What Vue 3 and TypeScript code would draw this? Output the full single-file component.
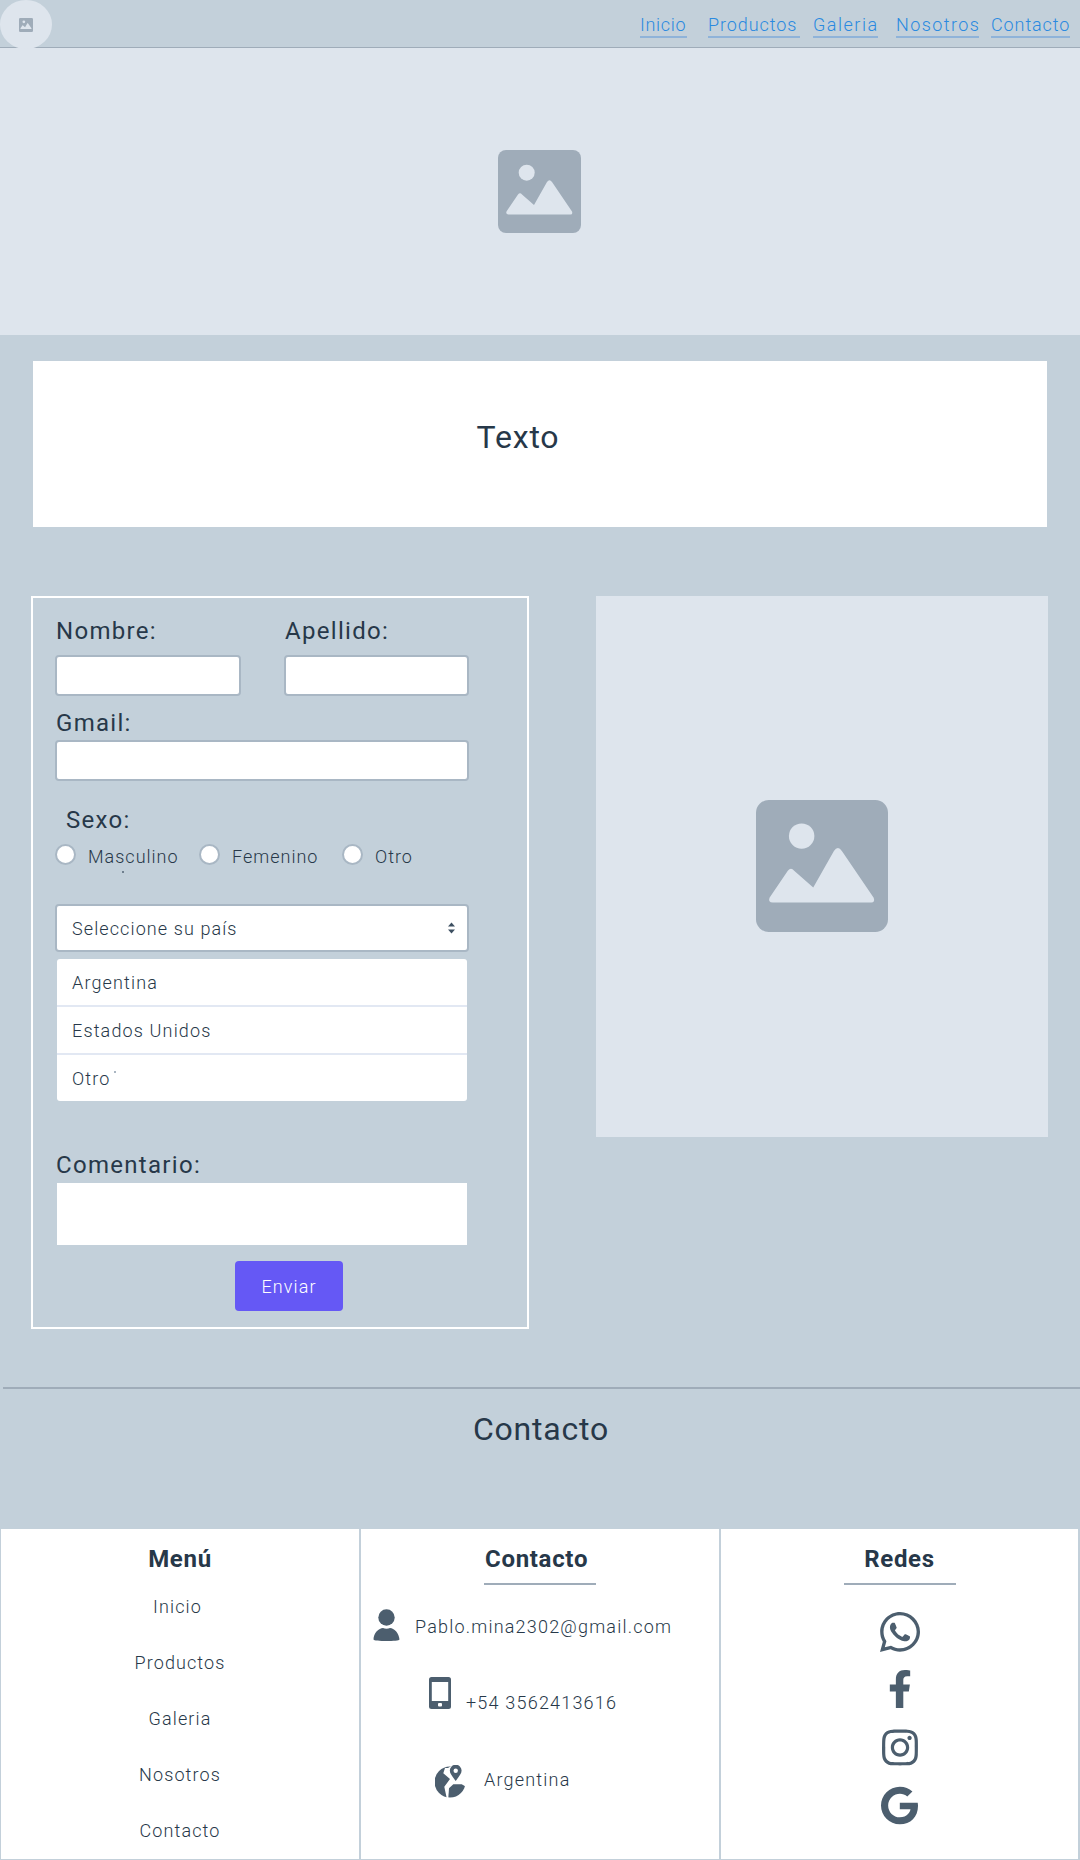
<script setup lang="ts">
const navLinks = [
  { label: 'Inicio', width: 47, gap: 21, spacing: 0.7 },
  { label: 'Productos', width: 92, gap: 13, spacing: 0.9 },
  { label: 'Galeria', width: 65, gap: 18, spacing: 1.5 },
  { label: 'Nosotros', width: 83, gap: 12, spacing: 1.4 },
  { label: 'Contacto', width: 79, gap: 0, spacing: 0.9 },
]
const menu = ['Inicio', 'Productos', 'Galeria', 'Nosotros', 'Contacto']
const paises = ['Argentina', 'Estados Unidos', 'Otro']
const sexos = ['Masculino', 'Femenino', 'Otro']
</script>

<template>
  <div class="page">
    <svg width="0" height="0" class="defs">
      <symbol id="pic" viewBox="0 0 83 83">
        <rect width="83" height="83" rx="8" fill="#9facb9" />
        <circle cx="28.7" cy="22.7" r="8" fill="#dee5ed" />
        <path d="M8.5 61.5 L20 44.5 Q22 42 24 44.5 L36 55 L49 32 Q51.5 28.5 54 32 L74 61.5 Q75 64.5 72.5 64.5 L10.5 64.5 Q7.5 64.5 8.5 61.5 Z" fill="#dee5ed" />
      </symbol>
      <clipPath id="globe-clip"><circle cx="15" cy="17" r="15.5" /></clipPath>
    </svg>

    <header class="nav">
      <div class="logo">
        <svg class="logo-icon"><use href="#pic" /></svg>
      </div>
      <nav class="links">
        <a
          v-for="l in navLinks"
          :key="l.label"
          class="link"
          :style="{ width: l.width + 'px', marginRight: l.gap + 'px', letterSpacing: l.spacing + 'px' }"
        >{{ l.label }}</a>
      </nav>
    </header>

    <section class="hero">
      <svg class="hero-icon"><use href="#pic" /></svg>
    </section>

    <section class="texto"><p>Texto</p></section>

    <section class="split">
      <form class="form">
        <div class="names">
          <div class="name-col">
            <label class="lbl">Nombre:</label>
            <input class="field" type="text" />
          </div>
          <div class="name-col second">
            <label class="lbl">Apellido:</label>
            <input class="field" type="text" />
          </div>
        </div>
        <label class="lbl gmail">Gmail:</label>
        <input class="field wide" type="text" />
        <div class="lbl sexo">Sexo:</div>
        <div class="radios">
          <label v-for="s in sexos" :key="s" class="radio-row">
            <span class="radio"></span>
            <span class="radio-text">{{ s }}</span>
          </label>
          <i class="speck speck-radio"></i>
        </div>
        <div class="select">
          <span>Seleccione su país</span>
          <svg class="arrows" width="7" height="12" viewBox="0 0 7 12">
            <path d="M3.5 0.5 L7 4.5 L0 4.5 Z M3.5 11.5 L7 7.5 L0 7.5 Z" fill="#3d4f61" />
          </svg>
        </div>
        <ul class="options">
          <li v-for="p in paises" :key="p">{{ p }}</li>
          <i class="speck speck-otro"></i>
        </ul>
        <label class="lbl comentario">Comentario:</label>
        <div class="area"></div>
        <div class="send-row"><button type="button" class="send">Enviar</button></div>
      </form>
      <div class="side">
        <svg class="side-icon"><use href="#pic" /></svg>
      </div>
    </section>

    <hr class="rule" />
    <h2 class="contact-title">Contacto</h2>

    <footer class="footer">
      <div class="col">
        <h3>Menú</h3>
        <div class="bar"></div>
        <ul class="menu">
          <li v-for="m in menu" :key="m">{{ m }}</li>
        </ul>
      </div>
      <div class="col col-mid">
        <h3 class="h-contact">Contacto</h3>
        <div class="bar bar-contact"></div>
        <div class="c-row r1">
          <svg class="ic" width="27" height="32" viewBox="0 0 27 32">
            <circle cx="13.5" cy="8.5" r="8.2" fill="#4c5e6e" />
            <path d="M0.5 30.5 C0.5 24 6 19 10 19 C12 20 15 20 17 19 C21 19 26 24 26.5 30.5 C26.5 32.5 0.5 32.5 0.5 30.5 Z" fill="#4c5e6e" />
          </svg>
          <span>Pablo.mina2302@gmail.com</span>
        </div>
        <div class="c-row r2">
          <svg class="ic" width="22" height="32" viewBox="0 0 22 32">
            <rect width="22" height="32" rx="2.5" fill="#4c5e6e" />
            <rect x="2.8" y="5" width="16.4" height="19" fill="#fff" />
            <rect x="9" y="26" width="4" height="3.4" rx="1" fill="#fff" />
          </svg>
          <span>+54 3562413616</span>
        </div>
        <div class="c-row r3">
          <svg class="ic" width="31" height="33" viewBox="0 0 31 33">
            <g clip-path="url(#globe-clip)" fill="#4c5e6e">
              <path d="M0 0 H18 L13 3 L10 3 L8.3 8.3 L15 14 L9.3 21.7 L11.7 33 H0 Z" />
              <path d="M14 23.3 L18.3 19.3 H26.7 L31 21.7 V33 H13.3 Z" />
            </g>
            <path d="M20.7 16 C17.5 11.5 14.8 8.8 14.8 5.6 A5.9 5.9 0 0 1 26.6 5.6 C26.6 8.8 23.9 11.5 20.7 16 Z" fill="#4c5e6e" />
            <circle cx="20.7" cy="5.7" r="2.2" fill="#fff" />
          </svg>
          <span>Argentina</span>
        </div>
      </div>
      <div class="col">
        <h3>Redes</h3>
        <div class="bar"></div>
        <div class="socials">
          <svg class="s-wa" viewBox="0 0 448 512"><path fill="#4c5e6e" d="M380.9 97.1C339 55.1 283.2 32 223.9 32c-122.4 0-222 99.6-222 222 0 39.1 10.2 77.3 29.6 111L0 480l117.7-30.9c32.4 17.7 68.9 27 106.1 27h.1c122.3 0 224.1-99.6 224.1-222 0-59.3-25.2-115-67.1-157zm-157 341.6c-33.2 0-65.7-8.9-94-25.7l-6.7-4-69.8 18.3L72 359.2l-4.4-7c-18.5-29.4-28.2-63.3-28.2-98.2 0-101.7 82.8-184.5 184.6-184.5 49.3 0 95.6 19.2 130.4 54.1 34.8 34.9 56.2 81.2 56.1 130.5 0 101.8-84.9 184.6-186.6 184.6zm101.2-138.2c-5.5-2.8-32.8-16.2-37.9-18-5.1-1.9-8.8-2.8-12.5 2.8-3.7 5.6-14.3 18-17.6 21.8-3.2 3.7-6.5 4.2-12 1.4-32.6-16.3-54-29.1-75.5-66-5.7-9.8 5.7-9.1 16.3-30.3 1.8-3.7.9-6.9-.5-9.7-1.4-2.8-12.5-30.1-17.1-41.2-4.5-10.8-9.1-9.3-12.5-9.5-3.2-.2-6.9-.2-10.6-.2-3.7 0-9.7 1.4-14.8 6.9-5.1 5.6-19.4 19-19.4 46.3 0 27.3 19.9 53.7 22.6 57.4 2.8 3.7 39.1 59.7 94.8 83.8 35.2 15.2 49 16.5 66.6 13.9 10.7-1.6 32.8-13.4 37.4-26.4 4.6-13 4.6-24.1 3.2-26.4-1.3-2.5-5-3.9-10.5-6.6z" /></svg>
          <svg class="s-fb" viewBox="0 0 320 512"><path fill="#4c5e6e" d="M279.14 288l14.22-92.66h-88.91v-60.13c0-25.35 12.42-50.06 52.24-50.06h40.42V6.26S260.43 0 225.36 0c-73.22 0-121.08 44.38-121.08 124.72v70.62H22.89V288h81.39v224h100.17V288z" /></svg>
          <svg class="s-ig" viewBox="0 0 448 512"><path fill="#4c5e6e" d="M224.1 141c-63.6 0-114.9 51.3-114.9 114.9s51.3 114.9 114.9 114.9S339 319.5 339 255.9 287.7 141 224.1 141zm0 189.6c-41.1 0-74.7-33.5-74.7-74.7s33.5-74.7 74.7-74.7 74.7 33.5 74.7 74.7-33.6 74.7-74.7 74.7zm146.4-194.3c0 14.9-12 26.8-26.8 26.8-14.9 0-26.8-12-26.8-26.8s12-26.8 26.8-26.8 26.8 12 26.8 26.8zm76.1 27.2c-1.7-35.9-9.9-67.7-36.2-93.9-26.2-26.2-58-34.4-93.9-36.2-37-2.1-147.9-2.1-184.9 0-35.8 1.7-67.6 9.9-93.9 36.1s-34.4 58-36.2 93.9c-2.1 37-2.1 147.9 0 184.9 1.7 35.9 9.9 67.7 36.2 93.9s58 34.4 93.9 36.2c37 2.1 147.9 2.1 184.9 0 35.9-1.7 67.7-9.9 93.9-36.2 26.2-26.2 34.4-58 36.2-93.9 2.1-37 2.1-147.8 0-184.8zM398.8 388c-7.8 19.6-22.9 34.7-42.6 42.6-29.5 11.7-99.5 9-132.1 9s-102.7 2.6-132.1-9c-19.6-7.8-34.7-22.9-42.6-42.6-11.7-29.5-9-99.5-9-132.1s-2.6-102.7 9-132.1c7.8-19.6 22.9-34.7 42.6-42.6 29.5-11.7 99.5-9 132.1-9s102.7-2.6 132.1 9c19.6 7.8 34.7 22.9 42.6 42.6 11.7 29.5 9 99.5 9 132.1s2.7 102.7-9 132.1z" /></svg>
          <svg class="s-g" viewBox="0 0 488 512"><path fill="#4c5e6e" d="M488 261.8C488 403.3 391.1 504 248 504 110.8 504 0 393.2 0 256S110.8 8 248 8c66.8 0 123 24.5 166.3 64.9l-67.5 64.9C258.5 52.6 94.3 116.6 94.3 256c0 86.5 69.1 156.6 153.7 156.6 98.2 0 135-70.4 140.8-106.9H248v-85.3h236.1c2.3 12.7 3.9 24.9 3.9 41.4z" /></svg>
        </div>
      </div>
    </footer>
  </div>
</template>

<style>
html, body { margin: 0; background: #c3d0da; }
</style>

<style scoped>
.page {
  width: 1080px;
  height: 1860px;
  overflow: hidden;
  background: #c3d0da;
  color: #273849;
  font-family: Roboto, "Liberation Sans", sans-serif;
}
.defs { position: absolute; }
.nav {
  height: 47px;
  border-bottom: 1px solid #9facb9;
  display: flex;
  justify-content: space-between;
  align-items: flex-start;
  position: relative;
}
.logo {
  width: 52px;
  height: 49px;
  border-radius: 50%;
  background: #dee5ed;
  display: flex;
  align-items: center;
  justify-content: center;
  position: relative;
  z-index: 1;
}
.logo-icon { width: 14px; height: 14px; }
.links { display: flex; padding-right: 10px; padding-top: 14px; }
.link {
  display: block;
  color: #2a8ae0;
  font-size: 18px;
  font-weight: 300;
  line-height: 21px;
  height: 22px;
  white-space: nowrap;
  border-bottom: 2px solid #8fb3d9;
  box-sizing: content-box;
}
.hero {
  height: 287px;
  background: #dee5ed;
  display: flex;
  align-items: center;
  justify-content: center;
}
.hero-icon { width: 83px; height: 83px; margin: -1px 2px 0 0; }
.texto {
  margin: 26px 33px 0;
  height: 166px;
  background: #fff;
  padding-right: 44px;
  text-align: center;
}
.texto p {
  margin: 0;
  padding-top: 55px;
  font-size: 32px;
  font-weight: 400;
  line-height: 42px;
  letter-spacing: 0.8px;
}
.split {
  display: flex;
  padding: 69px 32px 0 31px;
  justify-content: space-between;
  align-items: flex-start;
}
.form {
  box-sizing: border-box;
  width: 498px;
  height: 733px;
  border: 2px solid #fff;
  padding: 19px 0 0 22px;
}
.lbl {
  display: block;
  font-size: 24px;
  font-weight: 400;
  line-height: 28px;
  letter-spacing: 1.3px;
  margin-left: 1px;
}
.names { display: flex; }
.name-col { width: 186px; }
.name-col.second { width: 185px; margin-left: 43px; }
.field {
  display: block;
  box-sizing: border-box;
  width: 100%;
  height: 41px;
  margin-top: 10px;
  padding: 0;
  background: #fff;
  border: 2px solid #a9b7c4;
  border-radius: 4px;
  outline: none;
}
.gmail { margin-top: 13px; }
.field.wide { width: 414px; margin-top: 3px; }
.sexo { margin: 25px 0 0 11px; }
.radios { display: flex; margin-top: 9px; height: 28px; position: relative; }
.radio-row { display: flex; align-items: center; }
.radio-row:nth-child(1) { width: 144px; }
.radio-row:nth-child(2) { width: 143px; }
.radio {
  box-sizing: border-box;
  width: 21px;
  height: 21px;
  border-radius: 50%;
  background: #fff;
  border: 2px solid #a9b7c4;
  margin-top: -5px;
}
.radio-text {
  margin: -2px 0 0 12px;
  font-size: 18px;
  font-weight: 300;
  letter-spacing: 1px;
}
.speck {
  position: absolute;
  width: 2px;
  height: 2px;
  background: #6f7f8e;
}
.speck-radio { left: 67px; top: 28px; }
.speck-otro { left: 57px; top: 112px; background: #aab6c2; }
.select {
  box-sizing: border-box;
  width: 414px;
  height: 48px;
  margin-top: 33px;
  padding: 0 12px 0 15px;
  background: #fff;
  border: 2px solid #a9b7c4;
  border-radius: 4px;
  display: flex;
  align-items: center;
  justify-content: space-between;
  font-size: 18px;
  font-weight: 300;
  letter-spacing: 1.1px;
}
.options {
  position: relative;
  list-style: none;
  width: 410px;
  margin: 7px 0 0 2px;
  padding: 0;
  background: #fff;
  border-radius: 3px;
}
.options li {
  box-sizing: border-box;
  height: 48px;
  line-height: 47px;
  padding-left: 15px;
  font-size: 18px;
  font-weight: 300;
  letter-spacing: 1.15px;
  border-bottom: 2px solid #e2e8f3;
}
.options li:nth-child(3) { border-bottom: 0; height: 46px; }
.comentario { margin: 50px 0 0 1px; }
.area {
  width: 410px;
  height: 62px;
  margin: 4px 0 0 2px;
  background: #fff;
}
.send-row { width: 414px; display: flex; justify-content: center; padding-left: 54px; box-sizing: border-box; }
.send {
  width: 108px;
  height: 50px;
  margin-top: 16px;
  background: #6558f5;
  color: #fff;
  border: 0;
  border-radius: 4px;
  font-family: inherit;
  font-size: 18px;
  font-weight: 300;
  letter-spacing: 1.1px;
}
.side {
  width: 452px;
  height: 541px;
  background: #dee5ed;
  display: flex;
  align-items: center;
  justify-content: center;
}
.side-icon { width: 132px; height: 132px; margin-top: -1px; }
.rule {
  margin: 58px 0 0 3px;
  height: 2px;
  border: 0;
  background: #9facb9;
}
.contact-title {
  margin: 18px 0 0;
  padding-left: 2px;
  text-align: center;
  font-size: 32px;
  font-weight: 400;
  line-height: 44px;
  letter-spacing: 0.8px;
}
.footer {
  margin-top: 78px;
  height: 331px;
  box-sizing: border-box;
  display: flex;
  background: #fff;
  border: 2px solid #c3d0da;
  border-top: 0;
  border-bottom-width: 1px;
  border-left-width: 1px;
}
.col {
  width: 358px;
  flex: none;
  box-sizing: border-box;
  position: relative;
  display: flex;
  flex-direction: column;
  align-items: center;
}
.col:nth-child(2) { width: 362px; border-left: 2px solid #c3d0da; border-right: 2px solid #c3d0da; }
.col:nth-child(3) { width: 357px; }
.col h3 {
  margin: 16px 0 0;
  font-size: 24px;
  font-weight: 700;
  line-height: 28px;
  letter-spacing: 0.7px;
}
.bar {
  width: 112px;
  height: 2px;
  margin-top: 10px;
  background: #9facb9;
}
.menu { list-style: none; margin: 0; padding: 0; text-align: center; }
.menu li {
  height: 56px;
  line-height: 48px;
  font-size: 18px;
  font-weight: 300;
  letter-spacing: 1.1px;
}
.menu li:first-child { padding-right: 5px; }
.col-mid { align-items: flex-start; }
.h-contact { margin-left: 124px !important; }
.bar-contact { margin-left: 123px; }
.c-row {
  display: flex;
  font-size: 18px;
  font-weight: 300;
  letter-spacing: 1.2px;
  white-space: nowrap;
}
.c-row span { line-height: 22px; }
.r1 { margin: 24px 0 0 12px; align-items: center; gap: 15px; }
.r1 span { margin-top: 3px; }
.r2 { margin: 36px 0 0 68px; gap: 15px; }
.r2 span { margin-top: 15px; }
.r3 { margin: 51px 0 0 74px; gap: 18px; }
.r3 span { margin-top: 4px; }
.socials { display: flex; flex-direction: column; align-items: center; margin-top: 24px; }
.socials svg { display: block; }
.s-wa { width: 40px; height: 46px; }
.s-fb { width: 24px; height: 38px; margin-top: 15px; }
.s-ig { width: 36px; height: 41px; margin-top: 19px; }
.s-g { width: 37px; height: 39px; margin-top: 18px; }
</style>
